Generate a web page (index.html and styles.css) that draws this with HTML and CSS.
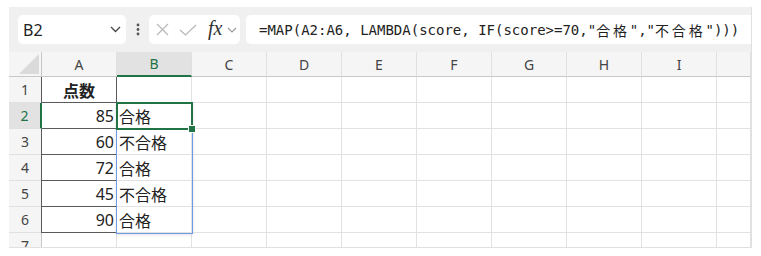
FILE: index.html
```html
<!DOCTYPE html>
<html>
<head>
    <title>Sheet</title>
    <link rel="stylesheet" href="styles.css">
</head>
<body>
    <div class="sheet">
        <div class="toolbar">
            <div class="name-box">
                <span>B2</span>
                <svg width="11" height="7" viewBox="0 0 11 7"><path d="M1 1l4.5 4.5L10 1" fill="none" stroke="#444" stroke-width="1.3"/></svg>
            </div>
            <div class="more">
                <svg width="4" height="13" viewBox="0 0 4 13"><circle cx="2" cy="2" r="1.4" fill="#555"/><circle cx="2" cy="6.5" r="1.4" fill="#555"/><circle cx="2" cy="11" r="1.4" fill="#555"/></svg>
            </div>
            <div class="fx-box">
                <svg width="13" height="13" viewBox="0 0 13 13"><path d="M1 1l11 11M12 1L1 12" stroke="#b8b8b8" stroke-width="1.2"/></svg>
                <svg width="18" height="12" viewBox="0 0 18 12"><path d="M1 6l5.5 5L17 1" fill="none" stroke="#b8b8b8" stroke-width="1.2"/></svg>
                <span class="fx">fx</span>
                <svg width="10" height="6" viewBox="0 0 10 6"><path d="M1 1l4 4 4-4" fill="none" stroke="#999" stroke-width="1.1"/></svg>
            </div>
            <div class="formula">=MAP(A2:A6, LAMBDA(score, IF(score&gt;=70,"<span class="wide">合格</span>","<span class="wide">不合格</span>")))</div>
        </div>

        <div class="grid-wrap">
            <div class="grid">
                <div class="corner"><span class="tri"></span></div>
                <div class="col-head">A</div>
                <div class="col-head sel">B</div>
                <div class="col-head">C</div>
                <div class="col-head">D</div>
                <div class="col-head">E</div>
                <div class="col-head">F</div>
                <div class="col-head">G</div>
                <div class="col-head">H</div>
                <div class="col-head">I</div>
                <div class="col-head"></div>

                <div class="row-head">1</div>
                <div class="cell bx hd">点数</div>
                <div class="cell"></div><div class="cell"></div><div class="cell"></div><div class="cell"></div><div class="cell"></div><div class="cell"></div><div class="cell"></div><div class="cell"></div><div class="cell"></div>

                <div class="row-head sel">2</div>
                <div class="cell bx num first">85</div>
                <div class="cell">合格</div>
                <div class="cell"></div><div class="cell"></div><div class="cell"></div><div class="cell"></div><div class="cell"></div><div class="cell"></div><div class="cell"></div><div class="cell"></div>

                <div class="row-head">3</div>
                <div class="cell bx num">60</div>
                <div class="cell">不合格</div>
                <div class="cell"></div><div class="cell"></div><div class="cell"></div><div class="cell"></div><div class="cell"></div><div class="cell"></div><div class="cell"></div><div class="cell"></div>

                <div class="row-head">4</div>
                <div class="cell bx num">72</div>
                <div class="cell">合格</div>
                <div class="cell"></div><div class="cell"></div><div class="cell"></div><div class="cell"></div><div class="cell"></div><div class="cell"></div><div class="cell"></div><div class="cell"></div>

                <div class="row-head">5</div>
                <div class="cell bx num">45</div>
                <div class="cell">不合格</div>
                <div class="cell"></div><div class="cell"></div><div class="cell"></div><div class="cell"></div><div class="cell"></div><div class="cell"></div><div class="cell"></div><div class="cell"></div>

                <div class="row-head">6</div>
                <div class="cell bx num">90</div>
                <div class="cell">合格</div>
                <div class="cell"></div><div class="cell"></div><div class="cell"></div><div class="cell"></div><div class="cell"></div><div class="cell"></div><div class="cell"></div><div class="cell"></div>

                <div class="row-head">7</div>
                <div class="cell"></div><div class="cell"></div><div class="cell"></div><div class="cell"></div><div class="cell"></div><div class="cell"></div><div class="cell"></div><div class="cell"></div><div class="cell"></div><div class="cell"></div>

                <!-- spill range and active cell drawn over the cells -->
                <div class="spill"></div>
                <div class="active"><span class="handle"></span></div>
            </div>
        </div>
    </div>
</body>
</html>
```

FILE: styles.css
```css
body {
    margin: 0;
    background: #fff;
    font-family: "Noto Sans", "Noto Sans CJK JP", sans-serif;
}

.sheet {
    margin: 7px 0 0 9px;
    width: 743px;
    box-sizing: border-box;
    background: #f0f0f0;
    border-right: 1px solid #e0e0e0;
    border-bottom: 1px solid #e0e0e0;
}

.toolbar {
    display: flex;
    align-items: center;
    height: 45px;
    padding: 0 0 0 9px;
    box-sizing: border-box;
}

.name-box {
    width: 108px;
    height: 29px;
    box-sizing: border-box;
    background: #fff;
    border-radius: 5px;
    display: flex;
    align-items: center;
    justify-content: space-between;
    padding: 0 5px 0 5px;
    font-size: 16px;
    color: #222;
}

.more {
    width: 23px;
    display: flex;
    justify-content: center;
}

.fx-box {
    width: 91px;
    height: 29px;
    box-sizing: border-box;
    background: #fff;
    border-radius: 5px;
    display: flex;
    align-items: center;
    gap: 10px;
    padding-left: 7px;
}

.fx-box .fx {
    font-family: "Liberation Serif", serif;
    font-style: italic;
    font-size: 20px;
    color: #333;
    margin-left: 1px;
    margin-right: -5px;
    margin-top: -4px;
    line-height: 1;
}

.formula {
    flex: 1;
    height: 29px;
    margin-left: 6px;
    box-sizing: border-box;
    background: #fff;
    border-radius: 5px 0 0 5px;
    padding-left: 13px;
    display: flex;
    align-items: center;
    font-family: "DejaVu Sans Mono", "Noto Sans CJK JP", monospace;
    font-size: 14px;
    color: #222;
    white-space: pre;
}

.wide {
    letter-spacing: 2.8px;
}

.grid-wrap {
    height: 195px;
    overflow: hidden;
}

.grid {
    display: grid;
    grid-template-columns: 33px repeat(9, 75px) 1fr;
    grid-template-rows: 25px repeat(7, 26px);
    position: relative;
}

.corner {
    background: #f5f5f5;
    border-right: 1px solid #c8c8c8;
    border-bottom: 1px solid #c8c8c8;
    display: flex;
    align-items: flex-end;
    justify-content: flex-end;
    padding: 0 2px 2px 0;
}

.tri {
    width: 0;
    height: 0;
    border-left: 20px solid transparent;
    border-bottom: 20px solid #dadada;
}

.col-head {
    background: #f5f5f5;
    border-right: 1px solid #e0e0e0;
    border-bottom: 1px solid #c8c8c8;
    display: flex;
    align-items: center;
    justify-content: center;
    font-size: 14px;
    color: #444;
}

.col-head.sel {
    background: #e2e2e2;
    color: #217346;
    border-bottom: 2px solid #217346;
}

.row-head {
    background: #f5f5f5;
    border-right: 1px solid #c8c8c8;
    border-bottom: 1px solid #e0e0e0;
    display: flex;
    align-items: center;
    justify-content: center;
    font-size: 14px;
    color: #444;
}

.row-head.sel {
    background: #e2e2e2;
    color: #217346;
    border-right: 2px solid #217346;
}

.cell {
    background: #fff;
    border-right: 1px solid #e2e2e2;
    border-bottom: 1px solid #e2e2e2;
    display: flex;
    align-items: center;
    padding: 0 2px;
    font-size: 16px;
    color: #222;
    white-space: nowrap;
}

.cell.bx {
    border-right-color: #5a5a5a;
    border-bottom-color: #5a5a5a;
    box-shadow: -1px 0 #5a5a5a;
}

.cell.bx.first {
    box-shadow: none;
}

.cell.num {
    justify-content: flex-end;
}

.cell.hd {
    justify-content: center;
    font-weight: bold;
}

.spill {
    position: absolute;
    grid-column: 3 / 4;
    grid-row: 3 / 8;
    top: 0;
    bottom: -1px;
    left: -1px;
    right: -1px;
    border: 1px solid #6d9ce6;
    box-shadow: 0 1px 3px rgba(0, 0, 0, 0.12);
}

.active {
    position: absolute;
    grid-column: 3 / 4;
    grid-row: 3 / 4;
    top: -1px;
    bottom: -1px;
    left: -1px;
    right: -1px;
    border: 2px solid #217346;
}

.handle {
    position: absolute;
    right: -5px;
    bottom: -5px;
    width: 6px;
    height: 6px;
    background: #217346;
    border: 1px solid #fff;
}
```
